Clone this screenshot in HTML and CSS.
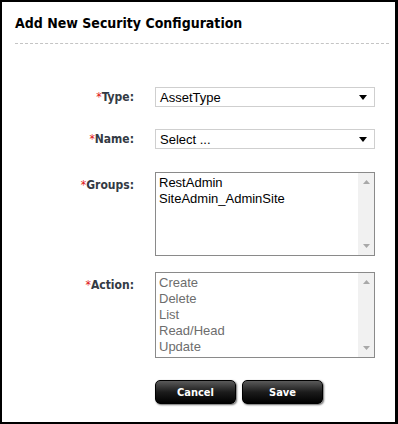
FILE: index.html
```html
<!DOCTYPE html>
<html lang="en">
<head>
    <meta charset="UTF-8">
    <title>Add New Security Configuration</title>
    <link rel="stylesheet" href="styles.css">
</head>
<body>
    <div class="dialog">
        <h1 class="dialog-title">Add New Security Configuration</h1>

        <div class="form">
            <div class="row row-type">
                <label class="label"><span class="req">*</span>Type:</label>
                <div class="select">
                    <span>AssetType</span>
                    <svg class="caret" width="8" height="5" viewBox="0 0 8 5"><path d="M0 0H8L4 5Z" fill="#000"/></svg>
                </div>
            </div>

            <div class="row row-name">
                <label class="label"><span class="req">*</span>Name:</label>
                <div class="select">
                    <span>Select ...</span>
                    <svg class="caret" width="8" height="5" viewBox="0 0 8 5"><path d="M0 0H8L4 5Z" fill="#000"/></svg>
                </div>
            </div>

            <div class="row row-groups">
                <label class="label label-top"><span class="req">*</span>Groups:</label>
                <div class="listbox">
                    <ul class="options">
                        <li>RestAdmin</li>
                        <li>SiteAdmin_AdminSite</li>
                    </ul>
                    <div class="scrollbar">
                        <svg width="7" height="4" viewBox="0 0 7 4"><path d="M0 4H7L3.5 0Z" fill="#a8a8a8"/></svg>
                        <svg width="7" height="4" viewBox="0 0 7 4"><path d="M0 0H7L3.5 4Z" fill="#a8a8a8"/></svg>
                    </div>
                </div>
            </div>

            <div class="row row-action">
                <label class="label label-top"><span class="req">*</span>Action:</label>
                <div class="listbox listbox-disabled">
                    <ul class="options">
                        <li>Create</li>
                        <li>Delete</li>
                        <li>List</li>
                        <li>Read/Head</li>
                        <li>Update</li>
                    </ul>
                    <div class="scrollbar">
                        <svg width="7" height="4" viewBox="0 0 7 4"><path d="M0 4H7L3.5 0Z" fill="#a8a8a8"/></svg>
                        <svg width="7" height="4" viewBox="0 0 7 4"><path d="M0 0H7L3.5 4Z" fill="#a8a8a8"/></svg>
                    </div>
                </div>
            </div>

            <div class="buttons">
                <button class="btn">Cancel</button>
                <button class="btn">Save</button>
            </div>
        </div>
    </div>
</body>
</html>
```

FILE: styles.css
```css
html, body {
    margin: 0;
    padding: 0;
    background: #ffffff;
}

.dialog {
    box-sizing: border-box;
    width: 398px;
    height: 424px;
    border: 2px solid #000000;
    border-right-width: 3px;
    background: #ffffff;
    font-family: 'Liberation Sans', Arial, sans-serif;
}

.dialog-title {
    margin: 0 6px 0 13px;
    padding: 12px 0 11px 0;
    font-family: 'DejaVu Sans Condensed', 'DejaVu Sans', Verdana, sans-serif;
    font-size: 14px;
    line-height: 18px;
    font-weight: 700;
    color: #000000;
    border-bottom: 1px dashed #c4c4c4;
}

.form {
    padding-top: 43px;
}

.row {
    display: flex;
    align-items: center;
    gap: 21px;
}

.row-type { margin-bottom: 22px; }
.row-name { margin-bottom: 23px; }
.row-groups { margin-bottom: 16px; align-items: flex-start; }
.row-action { margin-bottom: 22px; align-items: flex-start; }

.label {
    width: 132px;
    flex: none;
    text-align: right;
    font-family: 'DejaVu Sans Condensed', 'DejaVu Sans', Tahoma, sans-serif;
    font-size: 12px;
    font-weight: 700;
    color: #333a44;
}

.label-top {
    padding-top: 6px;
}

.req {
    color: #e01010;
    font-weight: 400;
}

.select {
    box-sizing: border-box;
    width: 220px;
    height: 20px;
    border: 1px solid #cfcfcf;
    display: flex;
    align-items: center;
    justify-content: space-between;
    padding: 0 7px 0 4px;
    font-size: 13px;
    color: #000000;
}

.caret {
    display: block;
}

.listbox {
    box-sizing: border-box;
    width: 220px;
    height: 84px;
    border: 1px solid #8a8a8a;
    display: flex;
}

.row-action .listbox {
    height: 86px;
}

.options {
    flex: 1;
    list-style: none;
    margin: 0;
    padding: 2px 3px;
    font-size: 13px;
    line-height: 16px;
    color: #000000;
}

.listbox-disabled .options {
    color: #6d6d6d;
}

.scrollbar {
    width: 16px;
    background: #f1f1f1;
    display: flex;
    flex-direction: column;
    justify-content: space-between;
    align-items: center;
    padding: 7px 0 7px 0;
    box-sizing: border-box;
}

.scrollbar svg {
    display: block;
}

.buttons {
    display: flex;
    gap: 6px;
    padding-left: 153px;
}

.btn {
    width: 81px;
    height: 24px;
    border: 1px solid #000000;
    border-radius: 5px;
    background: linear-gradient(#5a5a5a, #1c1c1c 50%, #000000);
    box-shadow: 1px 1px 2px rgba(0, 0, 0, 0.6);
    color: #ffffff;
    font-family: 'DejaVu Sans Condensed', 'DejaVu Sans', Tahoma, sans-serif;
    font-size: 11px;
    font-weight: 700;
    padding: 0;
}
```
